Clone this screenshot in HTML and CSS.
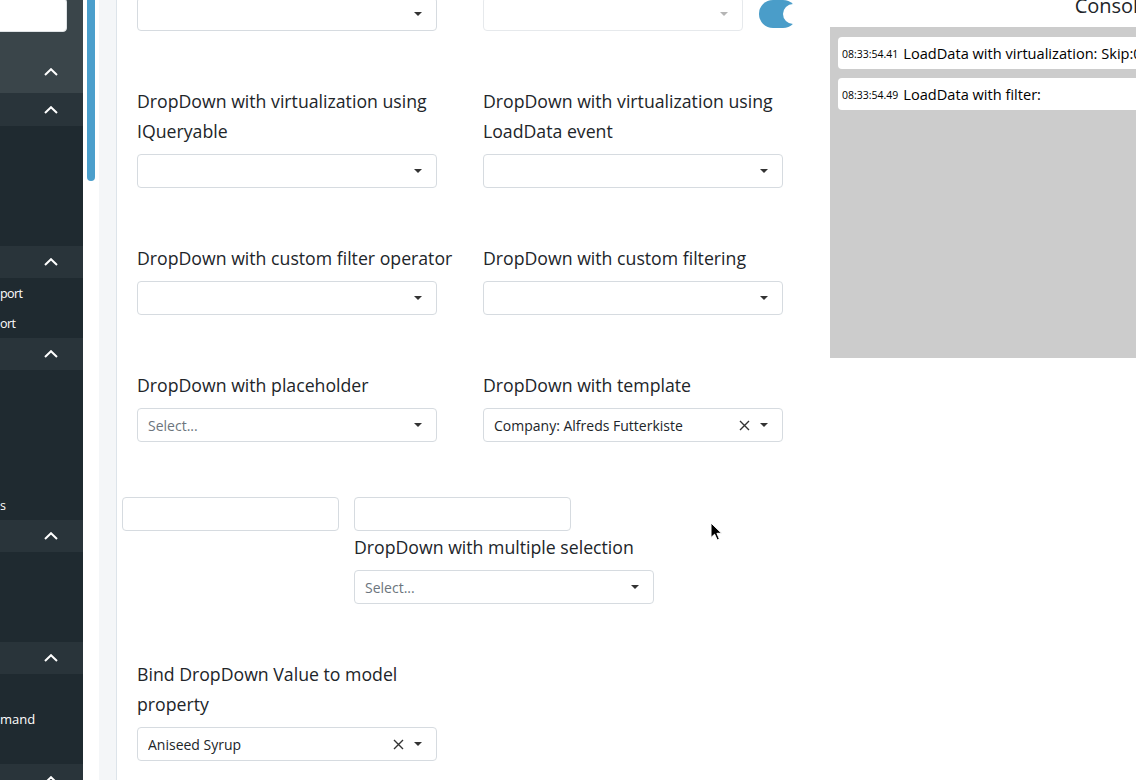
FILE: index.html
```html
<!DOCTYPE html>
<html lang="en">
<head>
<meta charset="utf-8">
<title>DropDown</title>
<link rel="stylesheet" href="styles.css">
</head>
<body>
<div class="app">
  <aside class="sidebar">
    <div class="side-top">
      <input class="search-input" type="text">
      <div class="side-head head-top">
        <svg class="chev" width="14" height="8" viewBox="0 0 14 8"><polyline points="1,7 7,1.2 13,7" fill="none" stroke="#fff" stroke-width="2"/></svg>
      </div>
    </div>
    <div class="side-head head-first">
      <svg class="chev" width="14" height="8" viewBox="0 0 14 8"><polyline points="1,7 7,1.2 13,7" fill="none" stroke="#fff" stroke-width="2"/></svg>
    </div>
    <div class="side-body">
      <div class="nav-item"></div>
      <div class="nav-item"></div>
      <div class="nav-item"></div>
      <div class="nav-item"></div>
    </div>
    <div class="side-head">
      <svg class="chev" width="14" height="8" viewBox="0 0 14 8"><polyline points="1,7 7,1.2 13,7" fill="none" stroke="#fff" stroke-width="2"/></svg>
    </div>
    <div class="side-body">
      <div class="nav-item"><span class="nav-text narrow-text">port</span></div>
      <div class="nav-item"><span class="nav-text narrow-text">ort</span></div>
    </div>
    <div class="side-head">
      <svg class="chev" width="14" height="8" viewBox="0 0 14 8"><polyline points="1,7 7,1.2 13,7" fill="none" stroke="#fff" stroke-width="2"/></svg>
    </div>
    <div class="side-body">
      <div class="nav-item"></div>
      <div class="nav-item"></div>
      <div class="nav-item"></div>
      <div class="nav-item"></div>
      <div class="nav-item"><span class="nav-text narrow-text">s</span></div>
    </div>
    <div class="side-head">
      <svg class="chev" width="14" height="8" viewBox="0 0 14 8"><polyline points="1,7 7,1.2 13,7" fill="none" stroke="#fff" stroke-width="2"/></svg>
    </div>
    <div class="side-body">
      <div class="nav-item"></div>
      <div class="nav-item"></div>
      <div class="nav-item"></div>
    </div>
    <div class="side-head">
      <svg class="chev" width="14" height="8" viewBox="0 0 14 8"><polyline points="1,7 7,1.2 13,7" fill="none" stroke="#fff" stroke-width="2"/></svg>
    </div>
    <div class="side-body">
      <div class="nav-item"></div>
      <div class="nav-item"><span class="nav-text">mand</span></div>
      <div class="nav-item"></div>
    </div>
    <div class="side-head head-last">
      <svg class="chev" width="14" height="8" viewBox="0 0 14 8"><polyline points="1,7 7,1.2 13,7" fill="none" stroke="#fff" stroke-width="2"/></svg>
    </div>
  </aside>

  <div class="gutter"><div class="thumb"></div></div>
  <div class="rail"></div>

  <main class="demo">
    <div class="grid grid-top">
      <div class="field">
        <div class="dropdown"><span class="dd-value"></span><span class="dd-arrow"></span></div>
      </div>
      <div class="field">
        <div class="toggle-row">
          <div class="dropdown narrow disabled"><span class="dd-value"></span><span class="dd-arrow"></span></div>
          <div class="toggle"><span class="knob"></span></div>
        </div>
      </div>

      <div class="field">
        <label class="flabel">DropDown with virtualization using IQueryable</label>
        <div class="dropdown"><span class="dd-value"></span><span class="dd-arrow"></span></div>
      </div>
      <div class="field">
        <label class="flabel">DropDown with virtualization using LoadData event</label>
        <div class="dropdown"><span class="dd-value"></span><span class="dd-arrow"></span></div>
      </div>

      <div class="field">
        <label class="flabel">DropDown with custom filter operator</label>
        <div class="dropdown"><span class="dd-value"></span><span class="dd-arrow"></span></div>
      </div>
      <div class="field">
        <label class="flabel">DropDown with custom filtering</label>
        <div class="dropdown"><span class="dd-value"></span><span class="dd-arrow"></span></div>
      </div>

      <div class="field">
        <label class="flabel">DropDown with placeholder</label>
        <div class="dropdown"><span class="dd-value dd-placeholder">Select...</span><span class="dd-arrow"></span></div>
      </div>
      <div class="field">
        <label class="flabel">DropDown with template</label>
        <div class="dropdown">
          <span class="dd-value">Company: Alfreds Futterkiste</span>
          <svg class="dd-clear" width="11" height="11" viewBox="0 0 11 11"><path d="M1 1L10 10M10 1L1 10" stroke="#333" stroke-width="1.4" fill="none"/></svg>
          <span class="dd-arrow"></span>
        </div>
      </div>
    </div>

    <div class="odd-row">
      <input class="plain-input" type="text">
      <div class="odd-col">
        <input class="plain-input" type="text">
        <label class="flabel">DropDown with multiple selection</label>
        <div class="dropdown"><span class="dd-value dd-placeholder">Select...</span><span class="dd-arrow"></span></div>
      </div>
    </div>

    <div class="grid">
      <div class="field">
        <label class="flabel">Bind DropDown Value to model property</label>
        <div class="dropdown">
          <span class="dd-value">Aniseed Syrup</span>
          <svg class="dd-clear" width="11" height="11" viewBox="0 0 11 11"><path d="M1 1L10 10M10 1L1 10" stroke="#333" stroke-width="1.4" fill="none"/></svg>
          <span class="dd-arrow"></span>
        </div>
      </div>
    </div>
  </main>

  <section class="console">
    <div class="console-title">Console</div>
    <div class="console-box">
      <div class="log"><span class="log-time">08:33:54.41</span><span class="log-msg">LoadData with virtualization: Skip:0, Top:5</span></div>
      <div class="log"><span class="log-time">08:33:54.49</span><span class="log-msg">LoadData with filter:</span></div>
    </div>
  </section>
</div>

<svg class="cursor" width="14" height="20" viewBox="0 0 14 20"><path d="M1 1 L1 15.5 L4.6 12.2 L7.2 18 L9.4 17 L6.9 11.3 L11.6 11.3 Z" fill="#000" stroke="#fff" stroke-width="1"/></svg>
</body>
</html>
```
FILE: styles.css
```css
* { box-sizing: border-box; }

html, body {
  margin: 0;
  height: 100%;
}

body {
  font-family: "Open Sans", "Liberation Sans", sans-serif;
  color: #212529;
  background: #fff;
  overflow: hidden;
}

.app {
  display: flex;
  width: 1400px;
  height: 780px;
}

/* ---------- sidebar ---------- */
.sidebar {
  width: 83px;
  flex: none;
  background: #1f2a30;
  overflow: hidden;
  display: flex;
  flex-direction: column;
  color: #fff;
  font-size: 13px;
}

.side-top {
  background: #3a454a;
  height: 93px;
  flex: none;
}

.search-input {
  display: block;
  width: 87px;
  height: 34px;
  margin: -2px 0 0 -20px;
  border: 1px solid #dfe3e6;
  border-radius: 4px;
  background: #fff;
}

.side-head {
  height: 32px;
  flex: none;
  display: flex;
  align-items: center;
  justify-content: flex-end;
  padding-right: 25px;
  background: #29343a;
}

.side-top .head-top {
  background: transparent;
  height: 42px;
  margin-top: 19px;
}

.head-first { height: 33px; }

.chev { display: block; }

.side-body {
  background: #1f2a30;
  flex: none;
}

.nav-item {
  height: 30px;
  display: flex;
  align-items: center;
  white-space: nowrap;
  color: #fff;
}

.nav-text { flex: none; }
.narrow-text { letter-spacing: -0.6px; font-size: 12.5px; }

/* ---------- scroll gutter + rail ---------- */
.gutter {
  width: 16px;
  flex: none;
  background: #fff;
  padding-left: 4px;
}

.thumb {
  width: 8px;
  height: 181px;
  background: #4b9fcc;
  border-radius: 0 0 4px 4px;
}

.rail {
  width: 18px;
  flex: none;
  background: #f4f6f8;
  border-right: 1px solid #dde4ea;
}

/* ---------- demo ---------- */
.demo {
  width: 713px;
  flex: none;
  padding-left: 20px;
}

.grid {
  display: grid;
  grid-template-columns: 346px 346px;
  row-gap: 55px;
}

.grid-top { margin-top: -3px; }

.flabel {
  display: block;
  font-size: 17.7px;
  line-height: 30px;
  margin-bottom: 8px;
  max-width: 330px;
  color: #212529;
}

.dropdown {
  width: 300px;
  height: 34px;
  border: 1px solid #d6dbe0;
  border-radius: 4px;
  background: #fff;
  display: flex;
  align-items: center;
  padding: 0 14px 0 10px;
  font-size: 14px;
  color: #212529;
}

.dd-value {
  flex: 1;
  white-space: nowrap;
  overflow: hidden;
}

.dd-placeholder { color: #6c757d; }

.dd-clear {
  flex: none;
  margin-right: 10px;
}

.dd-arrow {
  flex: none;
  width: 0;
  height: 0;
  border-left: 4px solid transparent;
  border-right: 4px solid transparent;
  border-top: 4px solid #333;
}

.toggle-row {
  display: flex;
  align-items: center;
  gap: 16px;
  width: 314px;
  height: 34px;
  overflow: hidden;
}

.dropdown.narrow {
  width: 260px;
  flex: none;
}

.dropdown.disabled { border-color: #e6e9ec; }
.dropdown.disabled .dd-arrow { border-top-color: #b5b5b5; }

.toggle {
  position: relative;
  width: 38px;
  height: 28px;
  flex: none;
  border-radius: 14px;
  background: #4a9dc9;
}

.knob {
  position: absolute;
  left: 24px;
  top: 4px;
  width: 20px;
  height: 20px;
  border-radius: 50%;
  background: #fff;
}

.odd-row {
  display: flex;
  align-items: flex-start;
  gap: 15px;
  margin: 55px 0 55px -15px;
}

.plain-input {
  display: block;
  width: 217px;
  height: 34px;
  border: 1px solid #d6dbe0;
  border-radius: 4px;
  background: #fff;
  margin: 0;
}

.odd-col .flabel { margin-top: 1px; }

/* ---------- console ---------- */
.console {
  width: 564px;
  flex: none;
}

.console-title {
  font-size: 20px;
  line-height: 11px;
  height: 11px;
  margin-bottom: 16px;
  text-align: center;
  color: #212529;
}

.console-box {
  background: #cccccc;
  height: 331px;
  padding: 10px 8px;
  display: flex;
  flex-direction: column;
  gap: 9px;
}

.log {
  background: #fff;
  border-radius: 4px;
  height: 32px;
  flex: none;
  display: flex;
  align-items: center;
  padding: 0 4px;
  white-space: nowrap;
  overflow: hidden;
  color: #000;
}

.log-time {
  font-size: 10.5px;
  margin-right: 5px;
  padding-top: 2px;
}

.log-msg { font-size: 14.6px; }

.cursor {
  position: absolute;
  left: 710px;
  top: 522px;
}
```
